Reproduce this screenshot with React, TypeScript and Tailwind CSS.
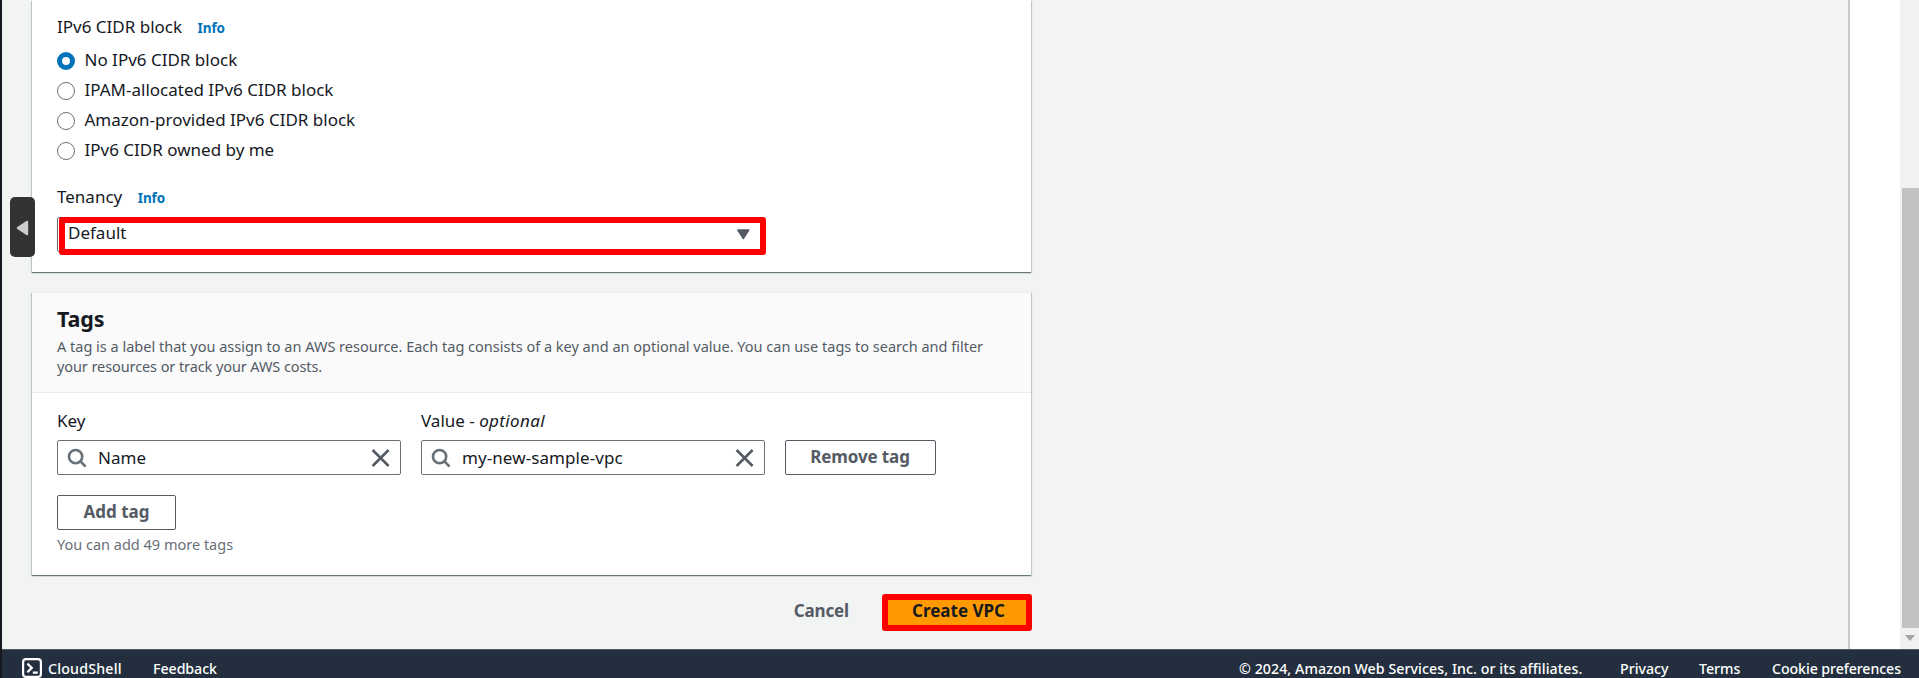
import type { ReactNode } from "react";

const CARD_SHADOW =
  "bg-white shadow-[0_1px_1px_0_rgba(0,28,36,0.4),1px_1px_1px_0_rgba(0,28,36,0.15),-1px_1px_1px_0_rgba(0,28,36,0.15)]";

function InfoLink() {
  return <a className="text-[13.5px] leading-[26px] font-bold tracking-[-0.1px] text-[#0073bb]">Info</a>;
}

function RadioOption({ label, checked = false }: { label: string; checked?: boolean }) {
  return (
    <label className="flex h-[30px] items-start">
      <span
        className={
          checked
            ? "mt-[5px] size-[18px] rounded-full border-[5.5px] border-[#0073bb] bg-white"
            : "mt-[5px] size-[18px] rounded-full border-[1.4px] border-[#687078] bg-white"
        }
      />
      <span className="mt-[1px] ml-[9.5px] leading-6">{label}</span>
    </label>
  );
}

function SearchField({ value }: { value: string }) {
  return (
    <div className="flex h-[35px] w-[344px] items-center rounded-[2px] border border-[#687078] bg-white pr-[9px] pl-[9px]">
      <svg className="size-5 shrink-0" viewBox="0 0 20 20" fill="none" stroke="#687078" strokeWidth="2.6">
        <circle cx="8.6" cy="8.6" r="6.6" />
        <path d="M13.2 13.2 18.6 18.6" />
      </svg>
      <span className="ml-[11px] flex-1 leading-6 tracking-[0.08px]">{value}</span>
      <svg className="size-5 shrink-0" viewBox="0 0 20 20" fill="none" stroke="#545b64" strokeWidth="2.6">
        <path d="M1.6 2 17.6 18M17.6 2 1.6 18" />
      </svg>
    </div>
  );
}

function Button({ children, className }: { children: ReactNode; className: string }) {
  return (
    <button
      className={`flex h-[35px] justify-center rounded-[2px] border border-[#545b64] bg-white pt-[4px] leading-6 font-bold text-[#545b64] ${className}`}
    >
      {children}
    </button>
  );
}

function NetworkCard() {
  return (
    <section className={`h-[272px] px-[25px] pt-[15px] ${CARD_SHADOW}`}>
      <div className="flex h-8 gap-[15.5px]">
        <span className="leading-6">IPv6 CIDR block</span>
        <InfoLink />
      </div>
      <RadioOption label="No IPv6 CIDR block" checked />
      <RadioOption label="IPAM-allocated IPv6 CIDR block" />
      <RadioOption label="Amazon-provided IPv6 CIDR block" />
      <RadioOption label="IPv6 CIDR owned by me" />
      <div className="mt-[18px] flex h-8 gap-[15.5px]">
        <span className="leading-6">Tenancy</span>
        <InfoLink />
      </div>
      <div className="relative flex h-[35px] w-[708px] items-start justify-between rounded-[2px] border border-[#687078] pt-[3px] pr-[14px] pl-[10px]">
        <span className="leading-6">Default</span>
        <svg className="mt-[8px] h-[11px] w-[14px]" viewBox="0 0 14 11">
          <path d="M1.8 1h11L7.3 9.6z" fill="#545b64" stroke="#545b64" strokeWidth="1.4" strokeLinejoin="round" />
        </svg>
        <div className="absolute -top-[1px] left-[0.5px] h-[38px] w-[707px] rounded-[3px] border-[6px] border-[#ff0000]" />
      </div>
    </section>
  );
}

function TagsCard() {
  return (
    <section className={`mt-5 h-[283px] ${CARD_SHADOW}`}>
      <header className="h-[101px] border-t border-b border-[#eaeded] bg-[#fafafa] px-[25px] pt-[11px]">
        <h2 className="mb-[2px] text-[21.5px] leading-[30px] font-bold tracking-[-0.1px] text-[#16191f]">Tags</h2>
        <p className="text-[14.5px] leading-5 text-[#545b64]">
          <span className="block whitespace-nowrap">
            A tag is a label that you assign to an AWS resource. Each tag consists of a key and an optional
            value. You can use tags to search and filter
          </span>
          <span className="block tracking-[-0.09px]">your resources or track your AWS costs.</span>
        </p>
      </header>
      <div className="px-[25px] pt-[16px]">
        <div className="flex items-end gap-5">
          <div className="flex flex-col gap-[7px]">
            <span className="leading-6">Key</span>
            <SearchField value="Name" />
          </div>
          <div className="flex flex-col gap-[7px]">
            <span className="leading-6">
              Value - <i className="tracking-[0.35px]">optional</i>
            </span>
            <SearchField value="my-new-sample-vpc" />
          </div>
          <Button className="-ml-[0.5px] w-[151px] tracking-[-0.12px]">Remove tag</Button>
        </div>
        <Button className="mt-5 w-[119px]">Add tag</Button>
        <p className="mt-[4px] text-[14.5px] leading-5 text-[#687078]">You can add 49 more tags</p>
      </div>
    </section>
  );
}

function FormActions() {
  return (
    <div className="-mr-[1px] flex items-start justify-end pt-[19px] leading-6 font-bold">
      <button className="mt-[5px] mr-[33px] tracking-[-0.15px] text-[#545b64]">Cancel</button>
      <button className="flex h-[37px] w-[150px] justify-center rounded-[3px] border-[6px] border-[#ff0000] bg-[#ff9900] text-[#16191f]">
        <span className="-mt-[1px] ml-[3px]">Create VPC</span>
      </button>
    </div>
  );
}

function Scrollbar() {
  return (
    <div className="flex w-[19px] flex-col items-end bg-[#f1f1f1] pt-[188px]">
      <div className="h-[440px] w-[17px] bg-[#c1c1c1]" />
      <svg className="mt-[7px] mr-1 h-[6px] w-[10px]" viewBox="0 0 10 6">
        <path d="M0 0h10L5 6z" fill="#a3a3a3" />
      </svg>
    </div>
  );
}

function Footer() {
  return (
    <footer className="flex h-[29px] items-start border-t border-[#545b64] bg-[#232f3e] pt-[6px] pr-[18px] pl-5 text-[14.2px] leading-[26px] font-medium text-white">
      <svg className="mt-[2px] size-5 shrink-0" viewBox="0 0 20 20" fill="none" stroke="#fff" strokeWidth="2.2">
        <rect x="1.1" y="1.1" width="17.8" height="17.8" rx="3" />
        <path d="M5.4 5.6 9.8 9.9 5.4 14.2M10.8 14.6h5" />
      </svg>
      <span className="ml-[6px] w-[105px] tracking-[0.2px]">CloudShell</span>
      <span className="tracking-[-0.05px]">Feedback</span>
      <span className="ml-auto w-[381px] tracking-[0.07px]">
        © 2024, Amazon Web Services, Inc. or its affiliates.
      </span>
      <span className="w-[79px]">Privacy</span>
      <span className="w-[73px]">Terms</span>
      <span className="w-[129px] tracking-[-0.09px] whitespace-nowrap">Cookie preferences</span>
    </footer>
  );
}

export default function App() {
  return (
    <div className="relative flex h-[678px] w-[1919px] overflow-hidden bg-[#f2f3f3] font-['Noto_Sans',sans-serif] text-[17px] text-[#16191f]">
      <div className="w-[2px] bg-[#16191f]" />
      <div className="flex flex-1 flex-col">
        <div className="flex h-[649px]">
          <main className="w-[1846px] pl-[30px]">
            <div className="w-[999px]">
              <NetworkCard />
              <TagsCard />
              <FormActions />
            </div>
          </main>
          <aside className="flex-1 border-l-2 border-[#c6c9c9] bg-white" />
          <Scrollbar />
        </div>
        <Footer />
      </div>
      <button className="absolute top-[197px] left-[10px] flex h-[60px] w-[25px] items-center justify-center rounded-[5px] bg-[#333333]">
        <svg className="mt-px h-4 w-[13px]" viewBox="0 0 13 16">
          <path d="M11 2v12L2 8z" fill="#cccccc" stroke="#cccccc" strokeWidth="2.4" strokeLinejoin="round" />
        </svg>
      </button>
    </div>
  );
}
